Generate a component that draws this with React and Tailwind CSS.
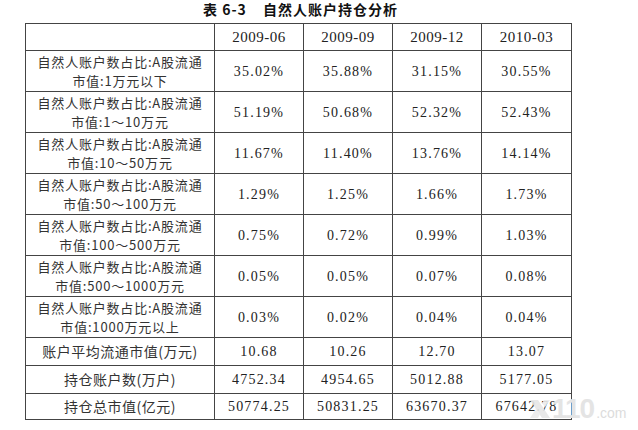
import React from 'react';

const rows = [
  { label: ['自然人账户数占比:A股流通', '市值:1万元以下'], values: ['35.02%', '35.88%', '31.15%', '30.55%'] },
  { label: ['自然人账户数占比:A股流通', '市值:1～10万元'], values: ['51.19%', '50.68%', '52.32%', '52.43%'] },
  { label: ['自然人账户数占比:A股流通', '市值:10～50万元'], values: ['11.67%', '11.40%', '13.76%', '14.14%'] },
  { label: ['自然人账户数占比:A股流通', '市值:50～100万元'], values: ['1.29%', '1.25%', '1.66%', '1.73%'] },
  { label: ['自然人账户数占比:A股流通', '市值:100～500万元'], values: ['0.75%', '0.72%', '0.99%', '1.03%'] },
  { label: ['自然人账户数占比:A股流通', '市值:500～1000万元'], values: ['0.05%', '0.05%', '0.07%', '0.08%'] },
  { label: ['自然人账户数占比:A股流通', '市值:1000万元以上'], values: ['0.03%', '0.02%', '0.04%', '0.04%'] },
];

const totals = [
  { label: '账户平均流通市值(万元)', values: ['10.68', '10.26', '12.70', '13.07'], h: 'h-[28px]' },
  { label: '持仓账户数(万户)', values: ['4752.34', '4954.65', '5012.88', '5177.05'], h: 'h-[28px]' },
  { label: '持仓总市值(亿元)', values: ['50774.25', '50831.25', '63670.37', '67642.78'], h: 'h-[26px]' },
];

const periods = ['2009-06', '2009-09', '2009-12', '2010-03'];

const serif = "font-['Liberation_Serif','Noto_Sans_CJK_SC',serif]";

const App = () => {
  return (
    <div className={`relative w-[638px] h-[430px] bg-white text-[#222] overflow-hidden ${serif}`}>
      <h1 className="h-[23px] pl-[203px] pt-[1px] text-[14px] font-bold leading-[16px] font-['Noto_Sans_CJK_SC',sans-serif] text-[#111] tracking-[1px]">
        表 6-3<span className="ml-[16px]">自然人账户持仓分析</span>
      </h1>
      <table className="ml-[25px] w-[546px] table-fixed border-collapse border-[1.5px] border-[#333]">
        <colgroup>
          <col className="w-[189px]" />
          <col className="w-[89px]" />
          <col className="w-[89px]" />
          <col className="w-[89px]" />
          <col className="w-[90px]" />
        </colgroup>
        <tbody>
          <tr className="h-[27px]">
            <td className="border border-[#444]"></td>
            {periods.map((p) => (
              <td key={p} className="border border-[#444] text-center text-[15px] tracking-[0.5px]">
                {p}
              </td>
            ))}
          </tr>
          {rows.map((row, i) => (
            <tr key={i} className="h-[41px]">
              <td className="border border-[#444] px-0 text-center text-[13px] leading-[19px] tracking-[0.8px] font-['Noto_Sans_CJK_SC',sans-serif] text-[#333]">
                <div>{row.label[0]}</div>
                <div>{row.label[1]}</div>
              </td>
              {row.values.map((v, j) => (
                <td key={j} className="border border-[#444] text-center text-[14px] tracking-[1.2px]">
                  {v}
                </td>
              ))}
            </tr>
          ))}
          {totals.map((row, i) => (
            <tr key={i} className={row.h}>
              <td className="border border-[#444] text-center text-[14px] leading-[19px] font-['Noto_Sans_CJK_SC',sans-serif] text-[#333] tracking-[0.5px]">
                {row.label}
              </td>
              {row.values.map((v, j) => (
                <td key={j} className="border border-[#444] text-center text-[14px] tracking-[1.2px]">
                  {v}
                </td>
              ))}
            </tr>
          ))}
        </tbody>
      </table>
      <div className="absolute left-[528px] top-[396px] flex items-end text-[#e4e4e4] font-['Liberation_Sans',sans-serif] select-none">
        <svg width="24" height="22" viewBox="0 0 24 22" className="mb-[2px] opacity-90">
          <path d="M2 2 L10 2 L22 20 L14 20 Z" fill="#e6e6e6" />
          <path d="M2 20 L8 11 L12 16 L10 20 Z" fill="#ececec" />
          <path d="M16 2 L22 2 L17 9 L14 5 Z" fill="#ececec" />
        </svg>
        <span className="text-[28px] font-bold leading-[26px] tracking-[-1px]">110</span>
        <span className="text-[14px] leading-[16px] ml-[2px] mb-[1px] text-[#dcdcdc]">.com</span>
      </div>
    </div>
  );
};

export default App;
